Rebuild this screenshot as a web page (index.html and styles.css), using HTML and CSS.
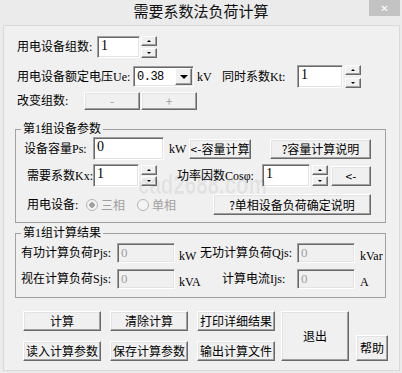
FILE: index.html
```html
<!DOCTYPE html>
<html lang="zh-CN">
<head>
    <meta charset="UTF-8">
    <title>需要系数法负荷计算</title>
    <link rel="stylesheet" href="styles.css">
</head>
<body>
    <div class="window">
        <div class="titlebar">
            <span class="title-pad"></span>
            <span class="title">需要系数法负荷计算</span>
            <span class="close">✕</span>
        </div>
        <div class="client">
            <div class="row row1">
                <span class="label w80">用电设备组数:</span>
                <span class="field w43 h22">1</span>
                <span class="spin h22 ml1"><span class="spin-btn up"></span><span class="spin-btn down"></span></span>
            </div>
            <div class="row row2">
                <span class="label w116">用电设备额定电压Ue:</span>
                <span class="select">
                    <span class="select-val">0.38</span>
                    <span class="select-btn"></span>
                </span>
                <span class="unit w25 ml3">kV</span>
                <span class="label w75">同时系数Kt:</span>
                <span class="field w46 h23">1</span>
                <span class="spin h23 ml2"><span class="spin-btn up"></span><span class="spin-btn down"></span></span>
            </div>
            <div class="row row3">
                <span class="label w67">改变组数:</span>
                <span class="btn disabled w56 h18">-</span>
                <span class="btn disabled w56 h18 ml1">+</span>
            </div>

            <div class="group group1">
                <div class="legend">第1组设备参数</div>
                <div class="row g1a">
                    <span class="label w69">设备容量Ps:</span>
                    <span class="field w71 h23">0</span>
                    <span class="unit w20 ml5">kW</span>
                    <span class="btn w62 h20">&lt;-容量计算</span>
                    <span class="btn w101 h20 ml19">?容量计算说明</span>
                </div>
                <div class="row g1b">
                    <span class="label w66">需要系数Kx:</span>
                    <span class="field w46 h23">1</span>
                    <span class="spin h21 ml2"><span class="spin-btn up"></span><span class="spin-btn down"></span></span>
                    <span class="label w85 ml20">功率因数Cosφ:</span>
                    <span class="field w48 h23">1</span>
                    <span class="spin h21 ml2"><span class="spin-btn up"></span><span class="spin-btn down"></span></span>
                    <span class="btn w40 h20 ml3">&lt;-</span>
                </div>
                <div class="row g1c">
                    <span class="label w59">用电设备:</span>
                    <span class="radio checked"></span>
                    <span class="radio-text">三相</span>
                    <span class="radio ml12"></span>
                    <span class="radio-text">单相</span>
                    <span class="btn w158 h21 ml37">?单相设备负荷确定说明</span>
                </div>
            </div>

            <div class="group group2">
                <div class="legend">第1组计算结果</div>
                <div class="row g2a">
                    <span class="label w96">有功计算负荷Pjs:</span>
                    <span class="field off w58 h20">0</span>
                    <span class="unit low w21 ml4">kW</span>
                    <span class="label w97">无功计算负荷Qjs:</span>
                    <span class="field off w58 h20">0</span>
                    <span class="unit low ml5">kVar</span>
                </div>
                <div class="row g2b">
                    <span class="label w96">视在计算负荷Sjs:</span>
                    <span class="field off w58 h20">0</span>
                    <span class="unit low w43 ml4">kVA</span>
                    <span class="label w75">计算电流Ijs:</span>
                    <span class="field off w58 h20">0</span>
                    <span class="unit low ml5">A</span>
                </div>
            </div>

            <div class="actions">
                <div class="action-grid">
                    <span class="btn">计算</span>
                    <span class="btn">清除计算</span>
                    <span class="btn">打印详细结果</span>
                    <span class="btn">读入计算参数</span>
                    <span class="btn">保存计算参数</span>
                    <span class="btn">输出计算文件</span>
                </div>
                <span class="btn exit">退出</span>
                <span class="btn help">帮助</span>
            </div>

            <div class="watermark">cad2688.com</div>
        </div>
    </div>
</body>
</html>
```

FILE: styles.css
```css
* {
    box-sizing: border-box;
}

body {
    margin: 0;
    background: #ebebeb;
    font-family: "Noto Sans CJK SC", sans-serif;
    font-size: 12px;
    color: #000;
}

.window {
    width: 402px;
    height: 373px;
    background: #ebebeb;
}

.titlebar {
    height: 25px;
    display: flex;
    align-items: flex-start;
}

.title-pad {
    width: 33px;
}

.title {
    flex: 1;
    text-align: center;
    font-size: 15px;
    line-height: 22px;
    color: #111;
}

.close {
    width: 31px;
    height: 16px;
    margin-right: 2px;
    background: #c3c3c3;
    color: #fff;
    display: flex;
    align-items: center;
    justify-content: center;
    font-family: "DejaVu Sans", sans-serif;
    font-size: 10px;
    font-weight: bold;
}

.client {
    position: relative;
    margin: 0 2px 0 3px;
    height: 346px;
    border: 1px solid #d9d9d9;
    background: #f0f0f0;
    padding-top: 10px;
}

.row {
    display: flex;
    align-items: center;
}

.label {
    flex: none;
    white-space: nowrap;
    line-height: 14px;
    font-family: "Liberation Serif", "Noto Sans CJK SC", serif;
}

.unit {
    flex: none;
    line-height: 14px;
    font-family: "Liberation Serif", serif;
    font-size: 12px;
}

.unit.low {
    align-self: flex-end;
}

/* sunken edit box */
.field {
    flex: none;
    background: #fff;
    border: 1px solid;
    border-color: #a0a0a0 #fff #fff #a0a0a0;
    box-shadow: inset 1px 1px 0 #696969, inset -1px -1px 0 #e3e3e3;
    padding: 2px 0 0 3px;
    font-family: "Liberation Serif", serif;
    font-size: 14px;
    line-height: 14px;
}

.field.off {
    background: #f0f0f0;
    color: #a0a0a0;
    font-size: 13px;
}

/* raised push button */
.btn {
    flex: none;
    background: #f0f0f0;
    border: 1px solid;
    border-color: #fff #696969 #696969 #fff;
    box-shadow: inset -1px -1px 0 #a0a0a0, inset 1px 1px 0 #e3e3e3;
    display: flex;
    align-items: center;
    justify-content: center;
    white-space: nowrap;
    line-height: 14px;
}

.btn.disabled {
    color: #a0a0a0;
}

.spin {
    flex: none;
    width: 16px;
    display: flex;
    flex-direction: column;
    justify-content: space-between;
}

.spin-btn {
    height: 10px;
    background: #f0f0f0;
    border: 1px solid;
    border-color: #fff #696969 #696969 #fff;
    box-shadow: inset -1px -1px 0 #a0a0a0;
    display: flex;
    align-items: center;
    justify-content: center;
}

.spin-btn::after {
    content: "";
    border-left: 2px solid transparent;
    border-right: 2px solid transparent;
}

.spin-btn.up::after {
    border-bottom: 2px solid #000;
}

.spin-btn.down::after {
    border-top: 2px solid #000;
}

.select {
    flex: none;
    width: 61px;
    height: 21px;
    background: #fff;
    border: 1px solid;
    border-color: #a0a0a0 #fff #fff #a0a0a0;
    box-shadow: inset 1px 1px 0 #696969, inset -1px -1px 0 #e3e3e3;
    display: flex;
    align-items: center;
    justify-content: space-between;
    padding: 0 1px 0 3px;
}

.select-val {
    font-family: "Liberation Mono", monospace;
    font-size: 12px;
    letter-spacing: -0.5px;
}

.select-btn {
    width: 17px;
    height: 17px;
    background: #f0f0f0;
    border: 1px solid;
    border-color: #fff #696969 #696969 #fff;
    box-shadow: inset -1px -1px 0 #a0a0a0;
    display: flex;
    align-items: center;
    justify-content: center;
}

.select-btn::after {
    content: "";
    border-left: 4px solid transparent;
    border-right: 4px solid transparent;
    border-top: 4px solid #000;
}

.radio {
    flex: none;
    width: 12px;
    height: 12px;
    border-radius: 50%;
    border: 1px solid #b4b4b4;
    background: #f4f4f4;
}

.radio.checked {
    background: radial-gradient(circle, #a0a0a0 0 2.5px, #f4f4f4 3px);
}

.radio-text {
    flex: none;
    width: 24px;
    margin-left: 3px;
    color: #a0a0a0;
    line-height: 14px;
}

/* group boxes */
.group {
    width: 371px;
    margin-left: 11px;
    border: 1px solid #a0a0a0;
}

.legend {
    width: max-content;
    margin: -8px 0 0 5px;
    padding: 0 2px;
    background: #f0f0f0;
    line-height: 14px;
    font-family: "Liberation Serif", "Noto Sans CJK SC", serif;
}

.group1 {
    height: 94px;
    margin-top: 19px;
}

.group2 {
    height: 65px;
    margin-top: 10px;
}

.row1 { height: 22px; padding-left: 13px; }
.row2 { height: 23px; margin-top: 7px; padding-left: 13px; }
.row3 { height: 18px; margin-top: 4px; padding-left: 13px; }

.g1a { height: 23px; margin-top: 1px; padding-left: 8px; }
.g1b { height: 23px; margin-top: 4px; padding-left: 11px; }
.g1c { height: 21px; margin-top: 7px; padding-left: 11px; }

.g2a { height: 20px; margin-top: 3px; padding-left: 5px; }
.g2b { height: 20px; margin-top: 6px; padding-left: 5px; }

.actions {
    display: flex;
    margin: 13px 0 0 19px;
}

.action-grid {
    display: grid;
    grid-template-columns: repeat(3, 78px);
    grid-auto-rows: 20px;
    column-gap: 9px;
    row-gap: 10px;
}

.exit {
    width: 68px;
    height: 50px;
    margin-left: 6px;
}

.help {
    width: 32px;
    height: 26px;
    margin-left: 7px;
    align-self: flex-end;
}

/* faint site stamp laid over the dialog */
.watermark {
    position: absolute;
    left: 134px;
    top: 146px;
    font-family: "Liberation Sans", sans-serif;
    font-weight: bold;
    font-size: 27px;
    line-height: 27px;
    color: rgba(0, 0, 0, 0.06);
    transform: scaleX(0.76);
    transform-origin: left top;
    pointer-events: none;
}

/* sizes */
.w20 { width: 20px; }
.w21 { width: 21px; }
.w25 { width: 25px; }
.w40 { width: 40px; }
.w43 { width: 43px; }
.w46 { width: 46px; }
.w48 { width: 48px; }
.w56 { width: 56px; }
.w58 { width: 58px; }
.w59 { width: 59px; }
.w62 { width: 62px; }
.w66 { width: 66px; }
.w67 { width: 67px; }
.w69 { width: 69px; }
.w71 { width: 71px; }
.w75 { width: 75px; }
.w80 { width: 80px; }
.w85 { width: 85px; }
.w96 { width: 96px; }
.w97 { width: 97px; }
.w101 { width: 101px; }
.w116 { width: 116px; }
.w158 { width: 158px; }

.h18 { height: 18px; }
.h20 { height: 20px; }
.h21 { height: 21px; }
.h22 { height: 22px; }
.h23 { height: 23px; }

.ml1 { margin-left: 1px; }
.ml2 { margin-left: 2px; }
.ml3 { margin-left: 3px; }
.ml4 { margin-left: 4px; }
.ml5 { margin-left: 5px; }
.ml12 { margin-left: 12px; }
.ml19 { margin-left: 19px; }
.ml20 { margin-left: 20px; }
.ml37 { margin-left: 37px; }
```
